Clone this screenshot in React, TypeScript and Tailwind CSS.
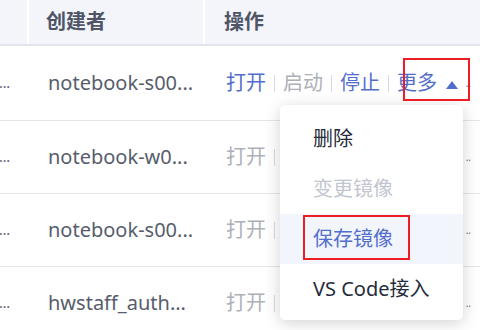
import React from "react";

const ROWS = [
  { creator: "notebook-s00...", active: true, h: "h-[75px]" },
  { creator: "notebook-w0...", active: false, h: "h-[73px]" },
  { creator: "notebook-s00...", active: false, h: "h-[73px]" },
  { creator: "hwstaff_auth...", active: false, h: "h-[73px]" },
];

const MENU = [
  { label: "删除", kind: "normal" },
  { label: "变更镜像", kind: "disabled" },
  { label: "保存镜像", kind: "hover" },
  { label: "VS Code接入", kind: "normal" },
];

function Sep() {
  return <span className="mx-[8px] h-[17px] w-px bg-[#d7dae2]" />;
}

// rows under the open menu only show what is not covered by it
function Actions({ active }: { active: boolean }) {
  return (
    <div className="flex flex-1 items-center whitespace-nowrap pr-[9px]">
      {active ? (
        <>
          <span className="text-[#526ecc]">打开</span>
          <Sep />
          <span className="text-[#adb0b8]">启动</span>
          <Sep />
          <span className="text-[#526ecc]">停止</span>
          <Sep />
          <span className="text-[#526ecc]">更多</span>
          <svg width="12" height="8" viewBox="0 0 12 8" className="ml-[9px] mt-[3px]">
            <path d="M6 0 L12 8 L0 8 Z" fill="#526ecc" />
          </svg>
        </>
      ) : (
        <>
          <span className="text-[#adb0b8]">打开</span>
          <Sep />
        </>
      )}
      <span className="ml-auto text-[10px] leading-none text-[#6b6f7a]">..</span>
    </div>
  );
}

export default function App() {
  return (
    <div
      className="relative h-[330px] w-[480px] overflow-hidden bg-white text-[20px] text-[#575d6c]"
      style={{ fontFamily: '"Noto Sans", "Noto Sans CJK SC", sans-serif' }}
    >
      {/* header */}
      <div className="flex h-[46px] border-b-2 border-[#e3e5ec] bg-[#f3f5fb] font-semibold text-[#4f5566]">
        <div className="w-[29px] border-r-2 border-white" />
        <div className="flex w-[176px] items-center border-r-2 border-white pl-[17px]">创建者</div>
        <div className="flex flex-1 items-center pl-[19px]">操作</div>
      </div>

      {ROWS.map((r, i) => (
        <div key={i} className={`flex ${r.h} border-b border-[#e4e6ec]`}>
          <div className="flex w-[31px] items-center justify-end pr-[21px] text-[14px] leading-none">…</div>
          <div className="flex w-[176px] items-center pl-[17px]">{r.creator}</div>
          <div className="flex flex-1 items-center overflow-hidden pl-[19px]">
            <Actions active={r.active} />
          </div>
        </div>
      ))}

      {/* dropdown menu */}
      <div className="absolute left-[280px] top-[105px] w-[183px] rounded-[5px] bg-white pb-[6px] pt-[9px] shadow-[0_3px_16px_rgba(0,0,0,0.18)]">
        {MENU.map((m) => (
          <div
            key={m.label}
            className={`flex h-[50px] items-center pl-[33px] ${
              m.kind === "hover"
                ? "bg-[#f2f5fc] text-[#526ecc]"
                : m.kind === "disabled"
                ? "text-[#c2c5cf]"
                : "text-[#252b3a]"
            }`}
          >
            {m.label}
          </div>
        ))}
      </div>

      {/* annotation boxes */}
      <div className="absolute left-[403px] top-[58px] h-[43px] w-[67px] border-2 border-[#ee1c25]" />
      <div className="absolute left-[303px] top-[215px] h-[45px] w-[107px] border-2 border-[#ee1c25]" />
    </div>
  );
}
